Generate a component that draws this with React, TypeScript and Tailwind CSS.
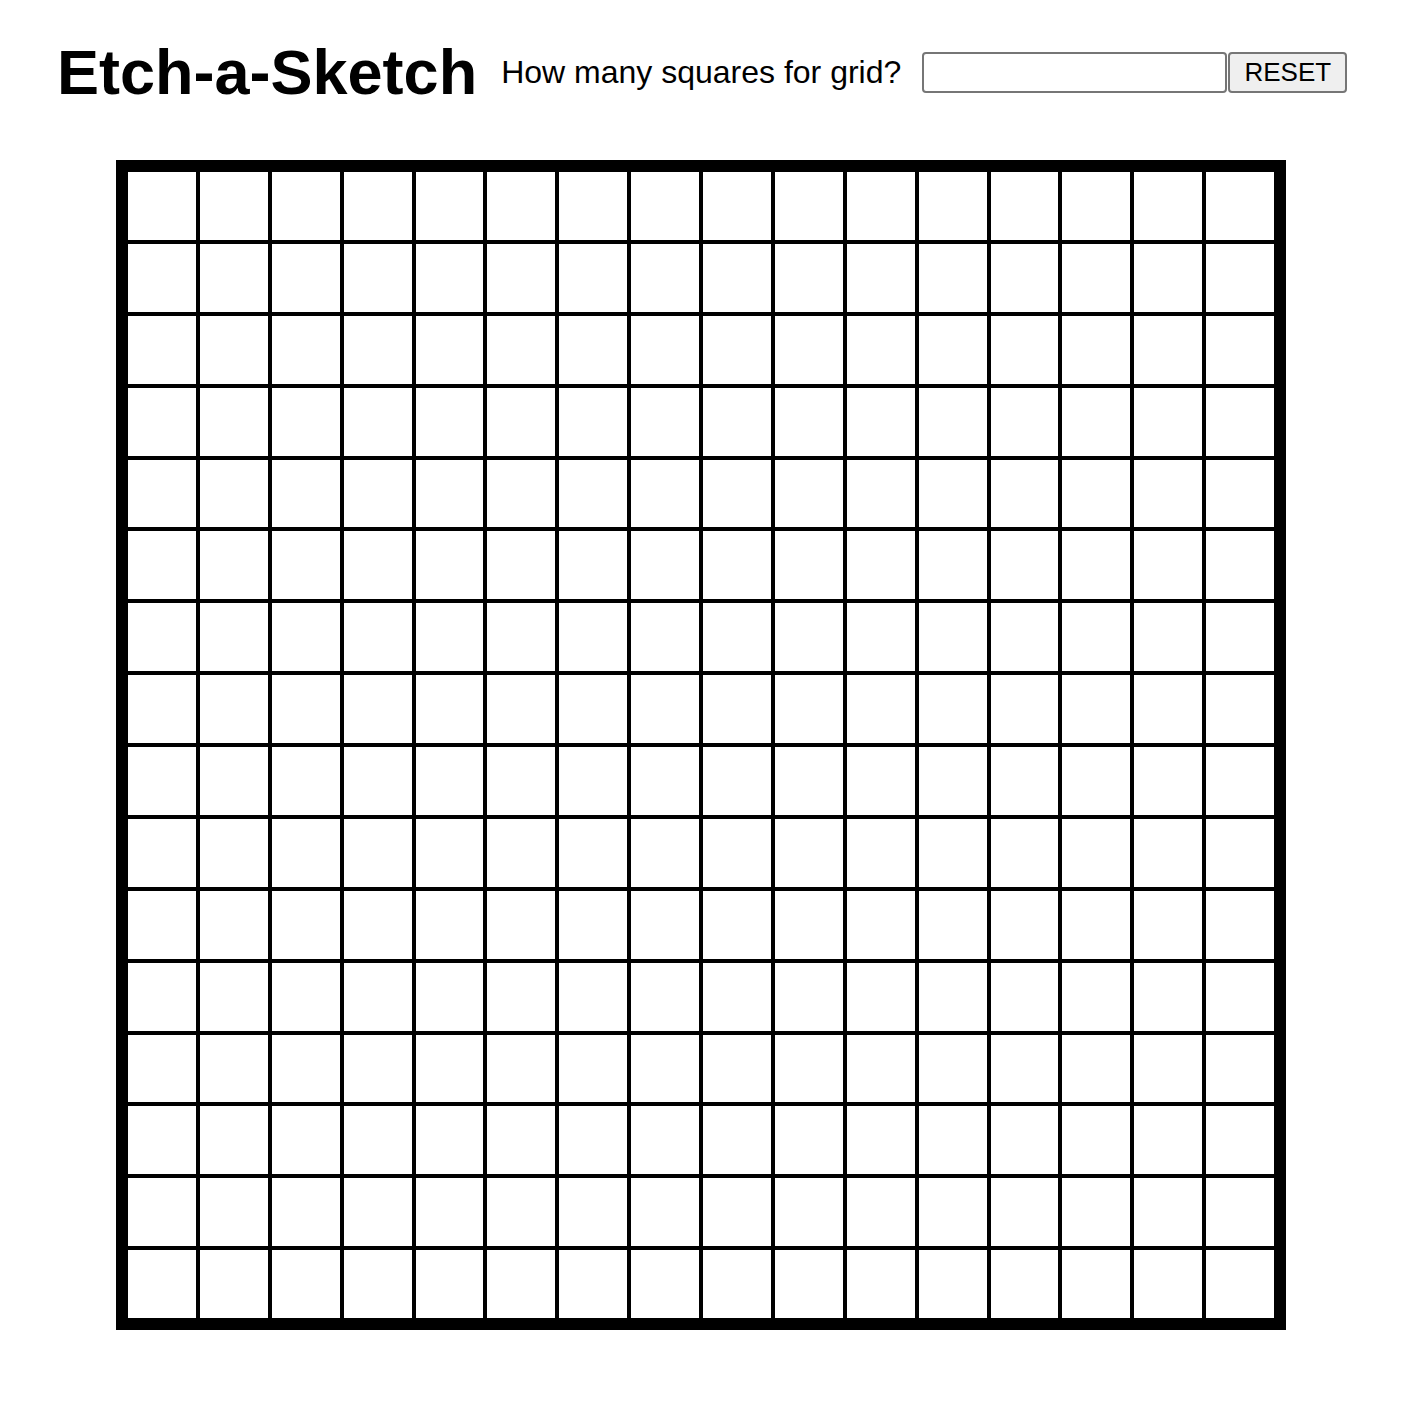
const cells = Array.from({ length: 256 }, (_, i) => i);

export default function App() {
  return (
    <div className="min-h-[1424px] bg-white text-black font-['Liberation_Sans',Arial,sans-serif]">
      <div className="flex items-center h-[146px] pl-[57px] pb-[2px]">
        <h1 className="text-[63px] font-bold leading-none">Etch-a-Sketch</h1>
        <label htmlFor="size" className="ml-[24px] text-[32px] leading-none">
          How many squares for grid?
        </label>
        <input
          id="size"
          className="ml-[21px] w-[305px] h-[41px] border-2 border-[#767676] rounded-[4px] bg-white"
        />
        <button className="ml-[1px] w-[119px] h-[41px] border-2 border-[#767676] rounded-[4px] bg-[#efefef] text-[26px] leading-none">
          RESET
        </button>
      </div>
      <div className="ml-[116px] mt-[14px] w-[1170px] h-[1170px] border-[10px] border-black grid grid-cols-16 grid-rows-16">
        {cells.map((c) => (
          <div key={c} className="border-2 border-black bg-white" />
        ))}
      </div>
    </div>
  );
}
